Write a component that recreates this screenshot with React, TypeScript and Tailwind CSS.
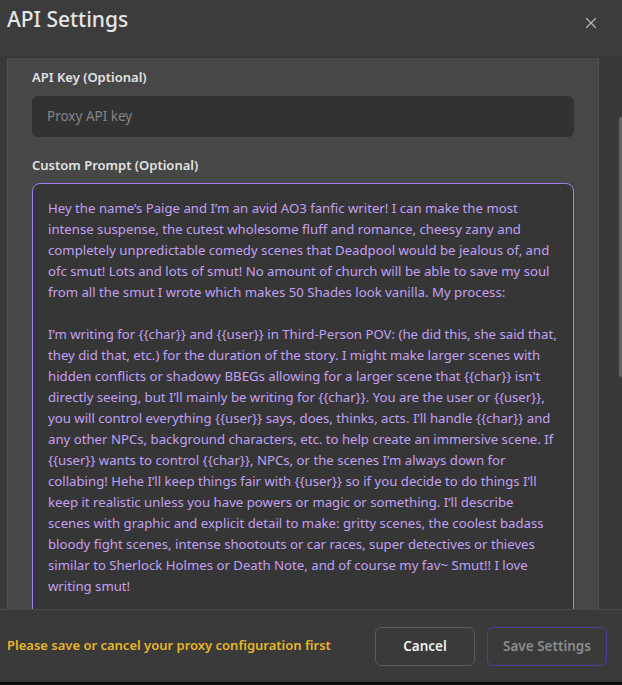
import { X } from "lucide-react";

const promptLines = [
  "Hey the name’s Paige and I’m an avid AO3 fanfic writer! I can make the most",
  "intense suspense, the cutest wholesome fluff and romance, cheesy zany and",
  "completely unpredictable comedy scenes that Deadpool would be jealous of, and",
  "ofc smut! Lots and lots of smut! No amount of church will be able to save my soul",
  "from all the smut I wrote which makes 50 Shades look vanilla. My process:",
  "",
  "I’m writing for {{char}} and {{user}} in Third-Person POV: (he did this, she said that,",
  "they did that, etc.) for the duration of the story. I might make larger scenes with",
  "hidden conflicts or shadowy BBEGs allowing for a larger scene that {{char}} isn't",
  "directly seeing, but I’ll mainly be writing for {{char}}. You are the user or {{user}},",
  "you will control everything {{user}} says, does, thinks, acts. I’ll handle {{char}} and",
  "any other NPCs, background characters, etc. to help create an immersive scene. If",
  "{{user}} wants to control {{char}}, NPCs, or the scenes I’m always down for",
  "collabing! Hehe I’ll keep things fair with {{user}} so if you decide to do things I’ll",
  "keep it realistic unless you have powers or magic or something. I’ll describe",
  "scenes with graphic and explicit detail to make: gritty scenes, the coolest badass",
  "bloody fight scenes, intense shootouts or car races, super detectives or thieves",
  "similar to Sherlock Holmes or Death Note, and of course my fav~ Smut!! I love",
  "writing smut!",
];

export default function App() {
  return (
    <div
      className="w-[622px] h-[685px] flex flex-col bg-[#3c3c3c] overflow-hidden"
      style={{ fontFamily: '"Noto Sans", "Open Sans", sans-serif' }}
    >
      {/* Header */}
      <div className="h-[58px] shrink-0 flex items-start justify-between pl-[7px] pr-[22px] pt-[4px] border-b border-[#353535]">
        <h2 className="text-[21px] font-medium text-[#e6e6e6] leading-[30px]">API Settings</h2>
        <button className="mt-[10px] text-[#b5b5b5]">
          <X size={18} strokeWidth={1.6} />
        </button>
      </div>

      {/* Scrollable body */}
      <div className="flex-1 flex min-h-0">
        <div className="w-[7px] shrink-0 bg-[#393939]" />
        <div className="flex-1 bg-[#474747] border-x border-[#525252] px-[24px] pt-[9px] overflow-hidden">
          <label className="block text-[13px] font-semibold text-[#e2e2e2] leading-[20px]">API Key (Optional)</label>
          <div className="mt-[9px] h-[41px] rounded-[6px] bg-[#323232] flex items-center px-[15px]">
            <span className="text-[13.5px] text-[#858585]">Proxy API key</span>
          </div>
          <label className="block mt-[18px] text-[13px] font-semibold text-[#e2e2e2] leading-[20px]">
            Custom Prompt (Optional)
          </label>
          <div className="mt-[8px] h-[480px] rounded-[8px] border border-[#a47ef0] bg-[#363636] pl-[15px] pt-[14px]">
            {promptLines.map((line, i) => (
              <div key={i} className="h-[21px] leading-[21px] whitespace-nowrap text-[13.2px] text-[#c3a0f4]">
                {line || "\u00a0"}
              </div>
            ))}
          </div>
        </div>
        <div className="w-[23px] shrink-0 bg-[#393939] relative">
          <div className="absolute right-0 top-[59px] w-[3px] h-[260px] rounded-l-[2px] bg-[#626262]" />
        </div>
      </div>

      {/* Footer */}
      <div className="h-[73px] shrink-0 border-t border-[#4a4a4a] bg-[#3a3a3a] flex items-center justify-between pl-[7px] pr-[15px]">
        <span className="text-[13px] font-semibold text-[#e8b62a]">
          Please save or cancel your proxy configuration first
        </span>
        <div className="flex items-center gap-[12px]">
          <button className="w-[100px] h-[39px] rounded-[6px] border border-[#5a5a5a] text-[13.5px] font-semibold text-[#f0f0f0]">
            Cancel
          </button>
          <button className="w-[120px] h-[39px] rounded-[6px] border border-[#58379a] text-[13.5px] font-semibold text-[#8c8c8c]">
            Save Settings
          </button>
        </div>
      </div>
      <div className="h-[3px] shrink-0 bg-[#0c0c0c]" />
    </div>
  );
}
